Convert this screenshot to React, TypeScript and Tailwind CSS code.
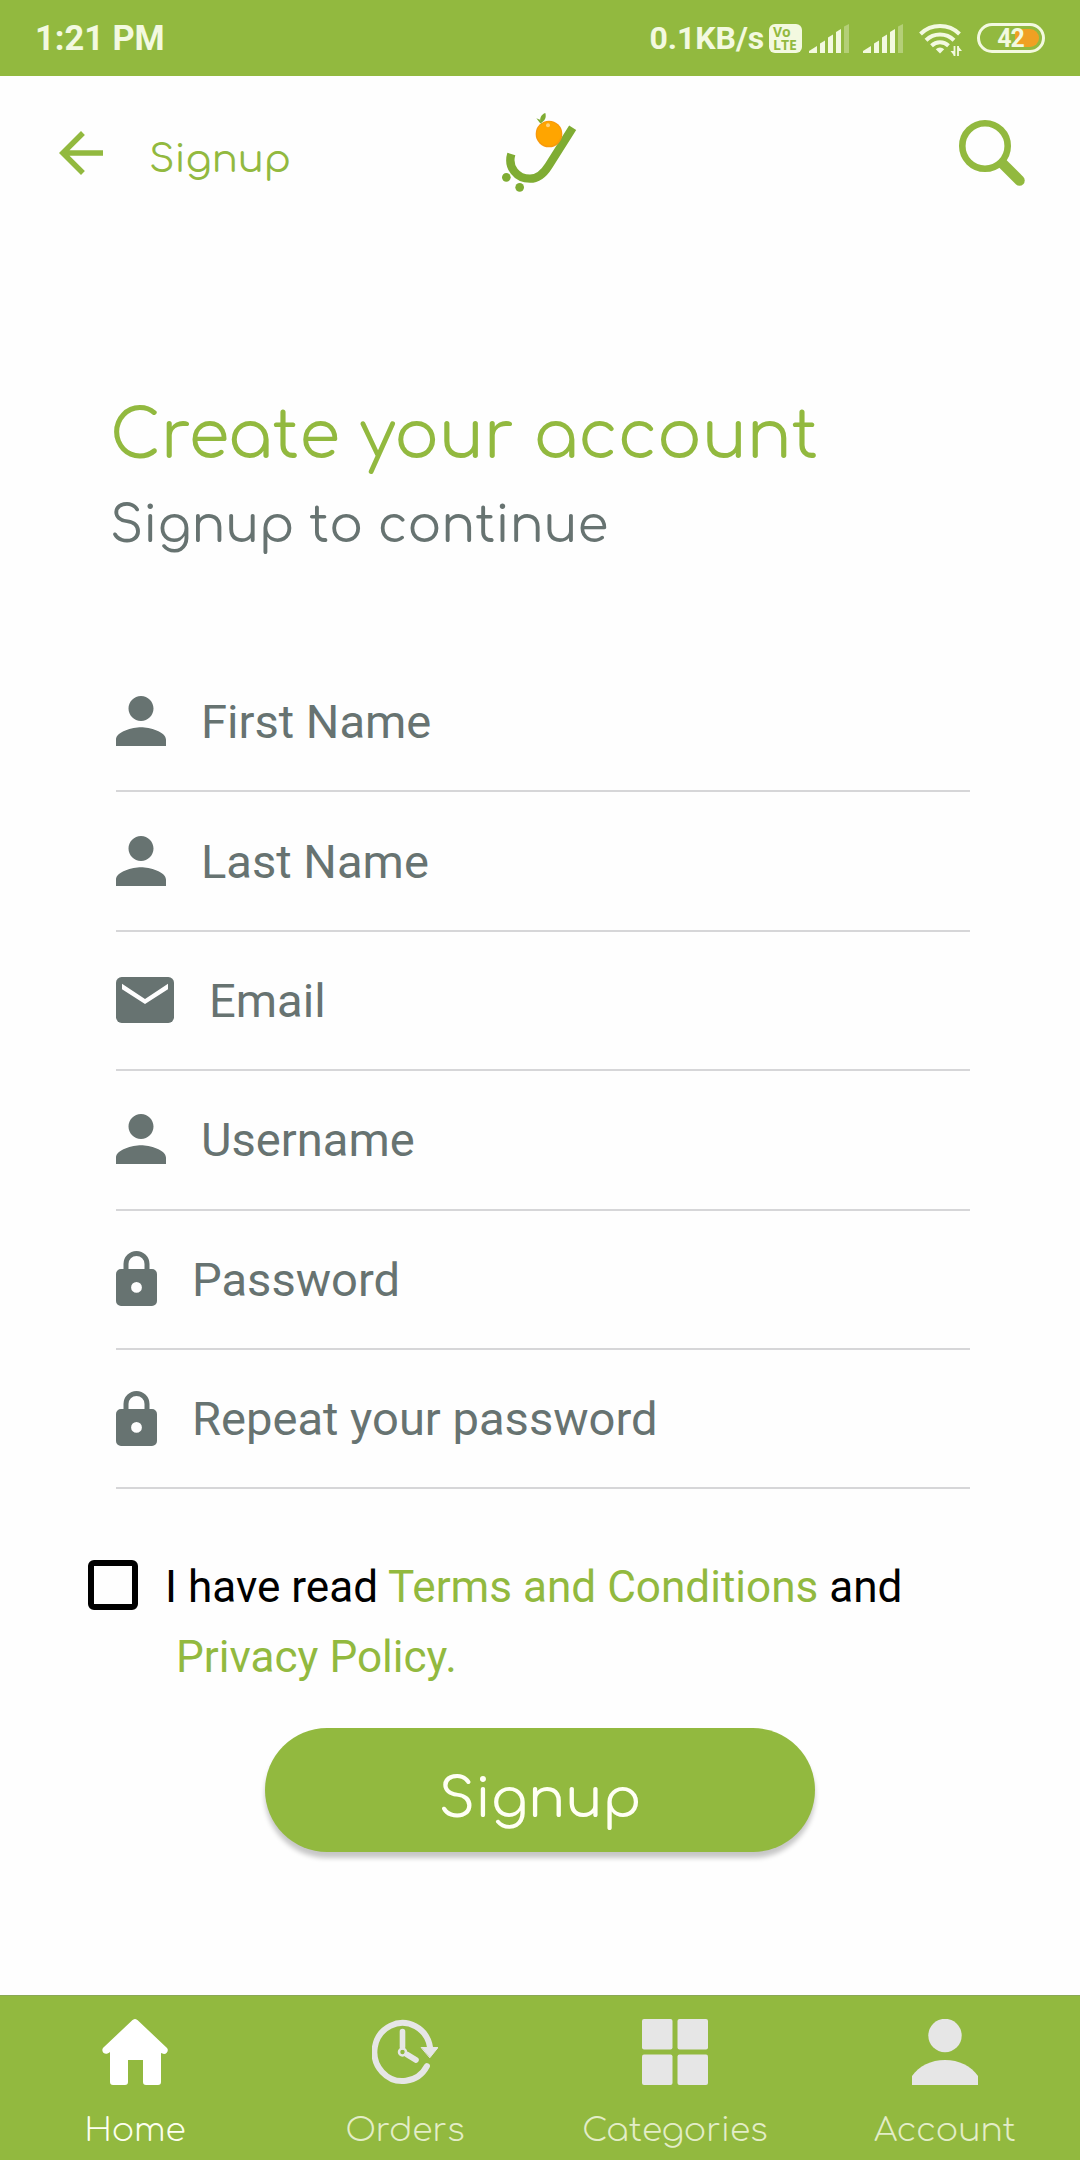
import React from "react";

type IconName = "person" | "mail" | "lock";

interface FieldProps {
  icon: IconName;
  label: string;
}

const fields: FieldProps[] = [
  { icon: "person", label: "First Name" },
  { icon: "person", label: "Last Name" },
  { icon: "mail", label: "Email" },
  { icon: "person", label: "Username" },
  { icon: "lock", label: "Password" },
  { icon: "lock", label: "Repeat your password" },
];

function SignalBars() {
  return (
    <svg width="40" height="29" viewBox="0 0 40 29" fill="#f3f9e0">
      <path d="M0 29v-2l8-5v7z" />
      <path d="M11 29V19.500l5-3V29z" />
      <path d="M19 29V13.500l5-3V29z" />
      <path d="M27 29V8l5-3V29z" />
      <path d="M35 29V2.500l5-2.500V29z" opacity="0.35" />
    </svg>
  );
}

function WifiIcon() {
  return (
    <svg width="43" height="34" viewBox="0 0 43 34" fill="none" stroke="#f3f9e0" strokeWidth="4">
      <path d="M1.500 11a28 28 0 0 1 39 0" />
      <path d="M7 17.200a20 20 0 0 1 28 0" />
      <path d="M12.500 22.700a12.500 12.500 0 0 1 17 0" />
      <path d="M21 30.500l-4.200-4.300a6 6 0 0 1 8.400 0z" fill="#f3f9e0" stroke="none" />
      <path d="M35.500 23v10M39 23v10" strokeWidth="1.800" />
      <path d="M31.500 28h4v5zM43 28h-4v-5z" fill="#f3f9e0" stroke="none" />
    </svg>
  );
}

function StatusBar() {
  return (
    <div className="flex h-[76px] shrink-0 items-center bg-[#92b93f] pl-[35px] pr-[35px] font-['Roboto',sans-serif] font-bold text-[#f3f9e0]">
      <span className="text-[34.400px] leading-[78px]">1:21 PM</span>
      <div className="ml-auto flex items-center">
        <span className="mr-[5px] text-[32px] leading-[78px] tracking-[-0.100px]">0.1KB/s</span>
        <div className="mr-[7px] flex h-[29px] w-[33px] flex-col justify-center rounded-[6px] bg-[#f3f9e0] pl-[4px] font-['Open_Sans',sans-serif] text-[14px] font-bold leading-[13px] text-[#92b93f]">
          <span>Vo</span>
          <span>LTE</span>
        </div>
        <SignalBars />
        <div className="w-[14px]" />
        <SignalBars />
        <div className="ml-[16px] mr-[15px] pt-[4px]">
          <WifiIcon />
        </div>
        <div className="flex h-[30px] w-[68px] items-center rounded-full border-[3px] border-[#f3f9e0] p-[3px]">
          <div className="flex h-[18px] w-full items-center justify-center rounded-full bg-[linear-gradient(90deg,transparent_57%,#f0a023_57%)] pr-[1px] text-[25px] leading-[18px] tracking-[-1px]">
            <span className="pt-[2px]">42</span>
          </div>
        </div>
      </div>
    </div>
  );
}

function Logo() {
  return (
    <svg width="120" height="110" viewBox="0 0 360 330">
      <path
        d="M278 98L206 212C188 241 171 251 150 251C110 251 82 216 94 177"
        fill="none"
        stroke="#7fac33"
        strokeWidth="25"
      />
      <circle cx="79" cy="247" r="13" fill="#7fac33" />
      <circle cx="119" cy="277" r="13" fill="#7fac33" />
      <circle cx="207" cy="117" r="40" fill="#f7990c" />
      <circle cx="207" cy="116" r="36" fill="#ffa500" />
      <circle cx="204" cy="91" r="6" fill="#ffd27a" />
      <path d="M182 84C177 70 184 58 196 54C200 68 194 78 182 84Z" fill="#7fac33" />
      <path d="M180 84L169 70L180 74L186 86Z" fill="#7fac33" />
    </svg>
  );
}

function Header() {
  return (
    <div className="flex h-[154px] shrink-0 items-center justify-between pl-[48px] pr-[50px]">
      <div className="flex w-[432px] items-center">
        <svg width="66" height="66" viewBox="0 0 24 24" fill="#92b93f">
          <path d="M20 11H7.830l5.590-5.590L12 4l-8 8 8 8 1.410-1.410L7.830 13H20v-2z" />
        </svg>
        <span className="ml-[35px] pt-[13px] font-['Comfortaa','Lato',sans-serif] text-[38.500px] leading-[48px] text-[#92b93f]">
          Signup
        </span>
      </div>
      <div className="-mt-[6px] mr-auto">
        <Logo />
      </div>
      <svg width="72" height="72" viewBox="0 0 72 72" fill="none" stroke="#92b93f">
        <circle cx="27" cy="29" r="22.700" strokeWidth="6.600" />
        <path d="M45 47L61.500 63.500" strokeWidth="10.500" strokeLinecap="round" />
      </svg>
    </div>
  );
}

function FieldIcon({ icon }: { icon: IconName }) {
  if (icon === "mail") {
    return (
      <svg width="58" height="46" viewBox="0 0 174 138" fill="#677371">
        <rect width="174" height="138" rx="17" />
        <path d="M18 20L87 66L156 20V37L87 81L18 37Z" fill="#fff" />
      </svg>
    );
  }
  if (icon === "lock") {
    return (
      <svg width="41" height="55" viewBox="0 0 41 55" fill="#677371">
        <path
          fillRule="evenodd"
          d="M5 18H36A5 5 0 0 1 41 23V50A5 5 0 0 1 36 55H5A5 5 0 0 1 0 50V23A5 5 0 0 1 5 18ZM20.500 31A5.400 5.400 0 1 0 20.500 41.800A5.400 5.400 0 1 0 20.500 31Z"
        />
        <path d="M10 19V13A10.500 10.500 0 0 1 31 13V19" fill="none" stroke="#677371" strokeWidth="5" />
      </svg>
    );
  }
  return (
    <svg width="50" height="50" viewBox="4 4 16 16" fill="#677371">
      <path d="M12 12c2.210 0 4-1.790 4-4s-1.790-4-4-4-4 1.790-4 4 1.790 4 4 4zm0 2c-2.670 0-8 1.340-8 4v2h16v-2c0-2.660-5.330-4-8-4z" />
    </svg>
  );
}

function Field({ icon, label }: FieldProps) {
  return (
    <div className="flex h-[139.400px] items-center gap-[35px] border-b-2 border-[#d6d6d8] pb-[1px]">
      <FieldIcon icon={icon} />
      <span className="pt-[2px] text-[47.100px] leading-[56px] text-[#677371]">{label}</span>
    </div>
  );
}

function HomeIcon() {
  return (
    <svg width="66" height="66" viewBox="0 0 66 66" fill="#fff">
      <path d="M33 0C34.500 0 35.500 1 36.500 2L65 29C67 31 65 35 62 35L59 34V63Q59 66 56 66H44Q41 66 41 63V41H26V63Q26 66 23 66H11Q8 66 8 63V33C5 36 1 35 .5 32C0 30 1 29 2 28L29.500 2C30.500 1 31.500 0 33 0Z" />
    </svg>
  );
}

function OrdersIcon() {
  return (
    <svg width="66" height="66" viewBox="0 0 66 66" fill="none" stroke="#e6e6e6" strokeLinecap="round">
      <path d="M55 47A28 29 0 1 1 58.200 29" strokeWidth="5.900" />
      <path d="M49.500 28.500H66L58 38.500Z" fill="#e6e6e6" stroke="#e6e6e6" strokeWidth="1" strokeLinejoin="round" />
      <path d="M30.500 12.500V28M35 35.500L44 41" strokeWidth="5.600" />
      <circle cx="30.500" cy="33" r="3.500" strokeWidth="2.500" />
    </svg>
  );
}

function CategoriesIcon() {
  return (
    <svg width="66" height="66" viewBox="0 0 66 66" fill="#e6e6e6">
      <rect width="30.500" height="30.500" rx="2" />
      <rect x="35.500" width="30.500" height="30.500" rx="2" />
      <rect y="35.500" width="30.500" height="30.500" rx="2" />
      <rect x="35.500" y="35.500" width="30.500" height="30.500" rx="2" />
    </svg>
  );
}

function AccountIcon() {
  return (
    <svg width="66" height="66" viewBox="0 0 66 66" fill="#e6e6e6">
      <circle cx="33" cy="16.500" r="16.700" />
      <path d="M0 66V57C7 47 19 41 33 41S59 47 66 57V66Z" />
    </svg>
  );
}

const tabs = [
  { label: "Home", Icon: HomeIcon, color: "text-[#fdfff0]" },
  { label: "Orders", Icon: OrdersIcon, color: "text-[#e3edc8]" },
  { label: "Categories", Icon: CategoriesIcon, color: "text-[#e3edc8]" },
  { label: "Account", Icon: AccountIcon, color: "text-[#e3edc8]" },
];

export default function App() {
  return (
    <div className="flex h-[2160px] w-[1080px] flex-col overflow-hidden bg-[#fefefe] font-['Roboto',sans-serif]">
      <StatusBar />
      <Header />

      <div className="px-[110px] pt-[162px] font-['Comfortaa','Lato',sans-serif]">
        <h1 className="text-[66.200px] leading-[90px] text-[#92b93f]">Create your account</h1>
        <p className="text-[50px] leading-[88px] text-[#677371]">Signup to continue</p>
      </div>

      {/* Form fields */}
      <div className="mx-[110px] mt-[83px] flex flex-col pl-[6px]">
        {fields.map((field) => (
          <Field key={field.label} {...field} />
        ))}
      </div>

      {/* Terms */}
      <div className="mt-[64px] flex items-start pl-[88px] text-[44.100px]">
        <div className="mt-[7px] h-[50px] w-[50px] shrink-0 rounded-[6px] border-[6px] border-black" />
        <div className="ml-[27px] leading-[69.500px] text-[#92b93f]">
          <div className="whitespace-nowrap">
            <span className="text-black">I have read</span> Terms and Conditions{" "}
            <span className="text-black">and</span>
          </div>
          <div className="pl-[11px]">Privacy Policy.</div>
        </div>
      </div>

      <button className="mx-auto mt-[36px] h-[124px] w-[550px] rounded-full bg-[#92b93f] pt-[19px] font-['Comfortaa','Lato',sans-serif] text-[55px] text-[#fffff4] shadow-[0_6px_5px_rgba(0,0,0,0.220)]">
        Signup
      </button>

      {/* Bottom tabs */}
      <div className="mt-auto grid h-[165px] shrink-0 grid-cols-4 border-t border-[#8aa855] bg-[#92b93f] font-['Comfortaa','Lato',sans-serif]">
        {tabs.map(({ label, Icon, color }) => (
          <div key={label} className="flex flex-col items-center pt-[23px]">
            <Icon />
            <span className={`mt-[26px] text-[33px] font-light leading-[40px] ${color}`}>{label}</span>
          </div>
        ))}
      </div>
    </div>
  );
}
